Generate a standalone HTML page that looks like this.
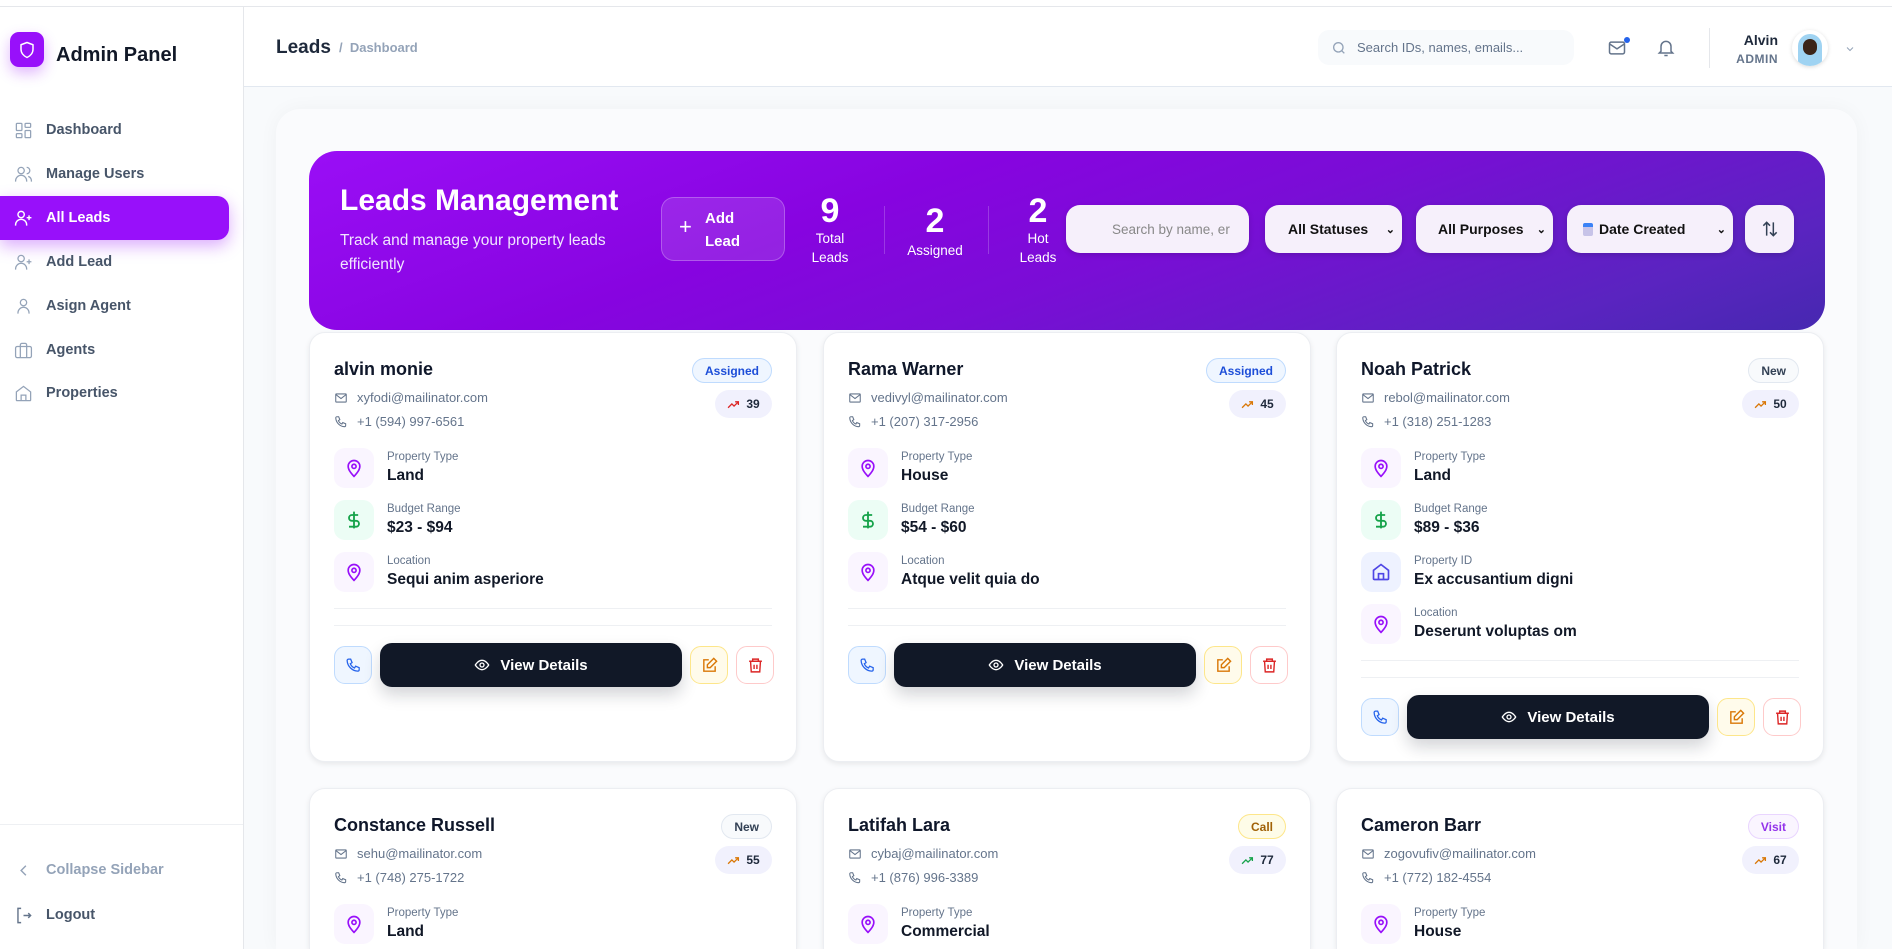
<!DOCTYPE html>
<html style="width:1892px;height:949px;overflow:hidden"><head><meta charset="utf-8"><style>
*{box-sizing:border-box;margin:0;padding:0}
body{width:1892px;height:949px;overflow:hidden;background:#f8fafc;font-family:"Liberation Sans",sans-serif;position:relative;color:#111827}
.abs{position:absolute}
svg{display:block}
.side{position:absolute;left:0;top:6px;width:244px;height:943px;background:#fff;border-right:1px solid #e5e7eb;border-top:1px solid #e5e7eb;z-index:2}
.nav{position:absolute;left:0;width:229px;height:44px;display:flex;align-items:center;padding-left:14px;font-size:14.5px;color:#475569;font-weight:600}
.nav svg{margin-right:13px}
.nav.act{background:#9810fa;color:#fff;border-radius:0 12px 12px 0;box-shadow:0 6px 16px rgba(152,16,250,.35)}
.hdr{position:absolute;left:244px;top:6px;right:0;height:81px;background:#fff;border-top:1px solid #e5e7eb;border-bottom:1px solid #e2e8f0}
.wrap{position:absolute;left:276px;top:109px;width:1581px;height:840px;background:#fafbfd;border-radius:24px 24px 0 0;box-shadow:0 0 20px rgba(0,0,0,.04)}
.banner{position:absolute;left:309px;top:151px;width:1516px;height:179px;border-radius:28px;background:linear-gradient(160deg,#9a0ef6 0%,#8704e0 35%,#7a0dd6 55%,#5a24c0 85%,#4628b0 100%)}
.sel{position:absolute;top:205px;height:48px;background:#f6f0fb;border-radius:14px;box-shadow:0 2px 6px rgba(0,0,0,.15);font-size:14px;font-weight:600;color:#111;display:flex;align-items:center}
.card{position:absolute;width:488px;height:430px;background:#fff;border:1px solid #eceef2;border-radius:16px;box-shadow:0 2px 6px rgba(0,0,0,.08)}
.name{position:absolute;left:24px;top:26px;font-size:18px;font-weight:700;color:#0f172a}
.ln{position:absolute;left:24px;font-size:13px;color:#64748b;display:flex;align-items:center}
.ln svg{margin-right:9px}
.badge{position:absolute;right:24px;top:25px;height:25px;padding:0 12px;border-radius:13px;font-size:12px;font-weight:600;display:flex;align-items:center;border:1px solid}
.score{position:absolute;right:24px;top:57px;height:28px;width:57px;border-radius:14px;background:#f1f1fd;font-size:12px;font-weight:700;color:#1e293b;display:flex;align-items:center;justify-content:center;gap:6px}
.ib{position:absolute;left:24px;width:40px;height:40px;border-radius:11px;display:flex;align-items:center;justify-content:center}
.lb{position:absolute;left:77px;font-size:11.5px;color:#64748b}
.vl{position:absolute;left:77px;font-size:15.5px;font-weight:600;color:#111827}
.hr{position:absolute;left:24px;right:24px;height:1px;background:#eef0f3}
.sb{position:absolute;width:38px;height:38px;border-radius:11px;border:1px solid;display:flex;align-items:center;justify-content:center}
.vd{position:absolute;left:70px;width:302px;height:44px;background:#111827;border-radius:12px;color:#fff;font-size:15px;font-weight:700;display:flex;align-items:center;justify-content:center;gap:10px;box-shadow:0 8px 16px rgba(17,24,39,.18)}
</style></head><body>
<div class="abs" style="left:0;top:0;width:1892px;height:6px;background:#fff"></div>
<div class="side">
 <div class="abs" style="left:10px;top:25px;width:34px;height:35px;background:#9810fa;border-radius:9px;box-shadow:0 6px 14px rgba(152,16,250,.3);display:flex;align-items:center;justify-content:center">
  <svg width="18" height="18" viewBox="0 0 24 24" fill="none" stroke="#fff" stroke-width="2" stroke-linejoin="round"><path d="M12 2l8 3v6c0 5-3.5 9-8 11-4.5-2-8-6-8-11V5z"/></svg></div>
 <div class="abs" style="left:56px;top:37px;font-size:20px;font-weight:700;color:#111827">Admin Panel</div>
 <div class="nav" style="top:101px"><svg width="19" height="19" viewBox="0 0 24 24" fill="none" stroke="#94a3b8" stroke-width="1.6"><rect x="3" y="3" width="7" height="9" rx="1"/><rect x="14" y="3" width="7" height="5" rx="1"/><rect x="14" y="12" width="7" height="9" rx="1"/><rect x="3" y="16" width="7" height="5" rx="1"/></svg>Dashboard</div>
 <div class="nav" style="top:145px"><svg width="19" height="19" viewBox="0 0 24 24" fill="none" stroke="#94a3b8" stroke-width="1.6"><circle cx="9" cy="7" r="4"/><path d="M2 21v-1a7 7 0 0114 0v1M16 3a4 4 0 010 8M22 21v-1a6 6 0 00-4-5.6"/></svg>Manage Users</div>
 <div class="nav act" style="top:189px"><svg width="19" height="19" viewBox="0 0 24 24" fill="none" stroke="#fff" stroke-width="1.8"><circle cx="9" cy="7" r="4"/><path d="M2 21v-1a7 7 0 0114 0v1M19 8v6M16 11h6"/></svg>All Leads</div>
 <div class="nav" style="top:233px"><svg width="19" height="19" viewBox="0 0 24 24" fill="none" stroke="#94a3b8" stroke-width="1.6"><circle cx="9" cy="7" r="4"/><path d="M2 21v-1a7 7 0 0114 0v1M19 8v6M16 11h6"/></svg>Add Lead</div>
 <div class="nav" style="top:277px"><svg width="19" height="19" viewBox="0 0 24 24" fill="none" stroke="#94a3b8" stroke-width="1.6"><circle cx="12" cy="7" r="4"/><path d="M5 21v-1a7 7 0 0114 0v1"/></svg>Asign Agent</div>
 <div class="nav" style="top:321px"><svg width="19" height="19" viewBox="0 0 24 24" fill="none" stroke="#94a3b8" stroke-width="1.6"><rect x="2" y="7" width="20" height="14" rx="2"/><path d="M16 21V5a2 2 0 00-2-2h-4a2 2 0 00-2 2v16"/></svg>Agents</div>
 <div class="nav" style="top:364px"><svg width="19" height="19" viewBox="0 0 24 24" fill="none" stroke="#94a3b8" stroke-width="1.6"><path d="M3 10l9-7 9 7v10a1 1 0 01-1 1H4a1 1 0 01-1-1z"/><path d="M9 21v-7h6v7"/></svg>Properties</div>
 <div class="abs" style="left:0;top:817px;width:243px;height:1px;background:#eef0f3"></div>
 <div class="nav" style="top:841px;color:#94a3b8"><svg width="19" height="19" viewBox="0 0 24 24" fill="none" stroke="#94a3b8" stroke-width="1.8"><path d="M15 6l-6 6 6 6"/></svg>Collapse Sidebar</div>
 <div class="nav" style="top:886px"><svg width="19" height="19" viewBox="0 0 24 24" fill="none" stroke="#64748b" stroke-width="1.8"><path d="M9 3H5v18h4M12 12h9M18 9l3 3-3 3"/></svg>Logout</div>
</div>
<div class="hdr">
 <div class="abs" style="left:32px;top:30px;font-size:19px;font-weight:700;color:#1e293b">Leads</div>
 <div class="abs" style="left:95px;top:33px;font-size:13px;color:#94a3b8;font-weight:600">/&nbsp; Dashboard</div>
 <div class="abs" style="left:1074px;top:23px;width:256px;height:35px;background:#f8fafc;border-radius:11px;display:flex;align-items:center;padding-left:13px;font-size:13px;color:#64748b">
  <svg width="16" height="16" viewBox="0 0 24 24" fill="none" stroke="#94a3b8" stroke-width="2"><circle cx="11" cy="11" r="7"/><path d="M20 20l-4-4"/></svg><span style="margin-left:10px">Search IDs, names, emails...</span></div>
 <svg class="abs" style="left:1363px;top:31px" width="20" height="20" viewBox="0 0 24 24" fill="none" stroke="#64748b" stroke-width="1.8"><rect x="3" y="5" width="18" height="14" rx="2"/><path d="M3 7l9 6 9-6"/></svg>
 <div class="abs" style="left:1380px;top:30px;width:6px;height:6px;border-radius:3px;background:#2563eb"></div>
 <svg class="abs" style="left:1412px;top:30px" width="20" height="22" viewBox="0 0 24 24" fill="none" stroke="#64748b" stroke-width="1.8"><path d="M6 16V10a6 6 0 0112 0v6l2 2H4z"/><path d="M10 21h4"/></svg>
 <div class="abs" style="left:1465px;top:21px;width:1px;height:40px;background:#e5e7eb"></div>
 <div class="abs" style="left:1480px;top:25px;width:54px;text-align:right;font-size:14px;font-weight:700;color:#1e293b">Alvin</div>
 <div class="abs" style="left:1470px;top:45px;width:64px;text-align:right;font-size:12px;font-weight:700;color:#64748b;letter-spacing:.5px">ADMIN</div>
 <div class="abs" style="left:1548px;top:23px;width:36px;height:36px;border-radius:18px;background:#fff;box-shadow:0 1px 4px rgba(0,0,0,.15);overflow:hidden">
  <div class="abs" style="left:6px;top:4px;width:24px;height:32px;border-radius:12px 12px 4px 4px;background:#9fd3f2"></div>
  <div class="abs" style="left:11px;top:9px;width:14px;height:16px;border-radius:7px;background:#3b2418"></div></div>
 <svg class="abs" style="left:1600px;top:36px" width="12" height="12" viewBox="0 0 24 24" fill="none" stroke="#94a3b8" stroke-width="2"><path d="M6 9l6 6 6-6"/></svg>
</div>
<div class="wrap"></div>
<div class="banner">
 <div class="abs" style="left:31px;top:33px;font-size:30px;font-weight:700;color:#fff">Leads Management</div>
 <div class="abs" style="left:31px;top:78px;width:290px;font-size:15.5px;line-height:24px;color:#f1e6ff">Track and manage your property leads efficiently</div>
 <div class="abs" style="left:352px;top:46px;width:124px;height:64px;border-radius:13px;background:rgba(255,255,255,.12);border:1px solid rgba(255,255,255,.25)">
  <div class="abs" style="left:17px;top:18px;font-size:22px;color:#fff;line-height:22px">+</div>
  <div class="abs" style="left:43px;top:9px;font-size:15px;font-weight:700;color:#fff;line-height:23px">Add<br>Lead</div></div>
 <div class="abs" style="left:491px;top:42px;width:60px;text-align:center;color:#fff"><div style="font-size:34px;font-weight:700;line-height:36px">9</div><div style="font-size:13.5px;line-height:19px">Total<br>Leads</div></div>
 <div class="abs" style="left:575px;top:55px;width:1px;height:48px;background:rgba(255,255,255,.2)"></div>
 <div class="abs" style="left:586px;top:50px;width:80px;text-align:center;color:#fff"><div style="font-size:34px;font-weight:700;line-height:40px">2</div><div style="font-size:13.5px;line-height:19px">Assigned</div></div>
 <div class="abs" style="left:679px;top:55px;width:1px;height:48px;background:rgba(255,255,255,.2)"></div>
 <div class="abs" style="left:699px;top:42px;width:60px;text-align:center;color:#fff"><div style="font-size:34px;font-weight:700;line-height:36px">2</div><div style="font-size:13.5px;line-height:19px">Hot<br>Leads</div></div>
</div>
<div class="sel" style="left:1066px;width:183px;padding-left:46px;color:#888;font-weight:500;font-size:13.5px">Search by name, er</div>
<div class="sel" style="left:1265px;width:137px;padding-left:23px">All Statuses<span style="position:absolute;right:7px;font-size:11px">&#8964;</span></div>
<div class="sel" style="left:1416px;width:137px;padding-left:22px">All Purposes<span style="position:absolute;right:7px;font-size:11px">&#8964;</span></div>
<div class="sel" style="left:1567px;width:166px;padding-left:16px"><span style="display:inline-block;width:10px;height:13px;background:linear-gradient(#3b82f6 30%,#c7c3e8 30%);border-radius:2px;margin-right:6px"></span>Date Created<span style="position:absolute;right:7px;font-size:11px">&#8964;</span></div>
<div class="sel" style="left:1745px;width:49px;justify-content:center"><svg width="20" height="20" viewBox="0 0 24 24" fill="none" stroke="#334155" stroke-width="1.8"><path d="M8 20V4M4 8l4-4 4 4M16 4v16M12 16l4 4 4-4"/></svg></div>

<script>
const pin='<svg width="20" height="20" viewBox="0 0 24 24" fill="none" stroke="#9810fa" stroke-width="2"><path d="M12 22s7-6.5 7-12a7 7 0 00-14 0c0 5.5 7 12 7 12z"/><circle cx="12" cy="10" r="2.5"/></svg>';
const dol='<svg width="20" height="22" viewBox="0 0 24 24" fill="none" stroke="#16a34a" stroke-width="2.2"><path d="M12 2v20M17 6H9.5a3.5 3.5 0 000 7h5a3.5 3.5 0 010 7H6"/></svg>';
const home='<svg width="20" height="20" viewBox="0 0 24 24" fill="none" stroke="#4f46e5" stroke-width="2"><path d="M3 10l9-7 9 7v10a1 1 0 01-1 1H4a1 1 0 01-1-1z"/><path d="M9 21v-7h6v7"/></svg>';
const mail='<svg width="14" height="14" viewBox="0 0 24 24" fill="none" stroke="#64748b" stroke-width="1.8"><rect x="3" y="5" width="18" height="14" rx="1"/><path d="M3 6l9 7 9-7"/></svg>';
const ph=(c,s)=>`<svg width="${s}" height="${s}" viewBox="0 0 24 24" fill="none" stroke="${c}" stroke-width="1.8"><path d="M5 3h3l2 5-2.5 1.5a11 11 0 006 6L15 13l5 2v3a2 2 0 01-2 2A16 16 0 013 5a2 2 0 012-2z"/></svg>`;
const tr=c=>`<svg width="13" height="13" viewBox="0 0 24 24" fill="none" stroke="${c}" stroke-width="2.4"><path d="M2 18l7-7 4 4 8-8M15 7h6v6"/></svg>`;
const B={Assigned:'background:#eff6ff;border-color:#bfdbfe;color:#1d4ed8',New:'background:#f8fafc;border-color:#e2e8f0;color:#334155',Call:'background:#fefce8;border-color:#fde68a;color:#a16207',Visit:'background:#faf5ff;border-color:#e9d5ff;color:#9333ea'};
const data=[
[309,332,'alvin monie','xyfodi@mailinator.com','+1 (594) 997-6561','Assigned',39,'#dc2626',[['pin','Property Type','Land'],['dol','Budget Range','$23 - $94'],['pin','Location','Sequi anim asperiore']]],
[823,332,'Rama Warner','vedivyl@mailinator.com','+1 (207) 317-2956','Assigned',45,'#d97706',[['pin','Property Type','House'],['dol','Budget Range','$54 - $60'],['pin','Location','Atque velit quia do']]],
[1336,332,'Noah Patrick','rebol@mailinator.com','+1 (318) 251-1283','New',50,'#d97706',[['pin','Property Type','Land'],['dol','Budget Range','$89 - $36'],['home','Property ID','Ex accusantium digni'],['pin','Location','Deserunt voluptas om']]],
[309,788,'Constance Russell','sehu@mailinator.com','+1 (748) 275-1722','New',55,'#d97706',[['pin','Property Type','Land']]],
[823,788,'Latifah Lara','cybaj@mailinator.com','+1 (876) 996-3389','Call',77,'#16a34a',[['pin','Property Type','Commercial']]],
[1336,788,'Cameron Barr','zogovufiv@mailinator.com','+1 (772) 182-4554','Visit',67,'#d97706',[['pin','Property Type','House']]]];
const IC={pin:[pin,'#faf5ff'],dol:[dol,'#ecfdf5'],home:[home,'#eef2ff']};
let h='';
for(const d of data){
 const [x,y,n,e,p,b,s,sc,rows]=d;
 let c=`<div class="card" style="left:${x}px;top:${y}px;${y>700?'height:161px;border-bottom:none;border-radius:16px 16px 0 0;overflow:hidden':''}"><div class="name">${n}</div>
 <div class="ln" style="top:57px">${mail}${e}</div><div class="ln" style="top:81px">${ph('#64748b',14)}${p}</div>
 <div class="badge" style="${B[b]}">${b}</div><div class="score">${tr(sc)}${s}</div>`;
 rows.forEach((r,i)=>{const t=115+i*52;c+=`<div class="ib" style="top:${t}px;background:${IC[r[0]][1]}">${IC[r[0]][0]}</div><div class="lb" style="top:${t+3}px">${r[1]}</div><div class="vl" style="top:${t+19}px">${r[2]}</div>`});
 if(rows.length>1){const o=(rows.length-3)*52;
 c+=`<div class="hr" style="top:${275+o}px"></div><div class="hr" style="top:${292+o}px"></div>
 <div class="sb" style="left:24px;top:${313+o}px;background:#eff6ff;border-color:#bfdbfe">${ph('#2563eb',17)}</div>
 <div class="vd" style="top:${310+o}px"><svg width="16" height="16" viewBox="0 0 24 24" fill="none" stroke="#fff" stroke-width="2"><path d="M2 12s4-7 10-7 10 7 10 7-4 7-10 7S2 12 2 12z"/><circle cx="12" cy="12" r="3"/></svg>View Details</div>
 <div class="sb" style="left:380px;top:${313+o}px;background:#fffbeb;border-color:#fde68a"><svg width="17" height="17" viewBox="0 0 24 24" fill="none" stroke="#d97706" stroke-width="2"><path d="M11 4H4v16h16v-7"/><path d="M18 2l4 4-9 9H9v-4z"/></svg></div>
 <div class="sb" style="left:426px;top:${313+o}px;background:#fff;border-color:#fecaca"><svg width="17" height="17" viewBox="0 0 24 24" fill="none" stroke="#dc2626" stroke-width="2"><path d="M3 6h18M8 6V3h8v3M5 6l1 15h12l1-15M10 11v6M14 11v6"/></svg></div>`;}
 h+=c+'</div>';
}
document.write(h);
</script>
</body></html>
